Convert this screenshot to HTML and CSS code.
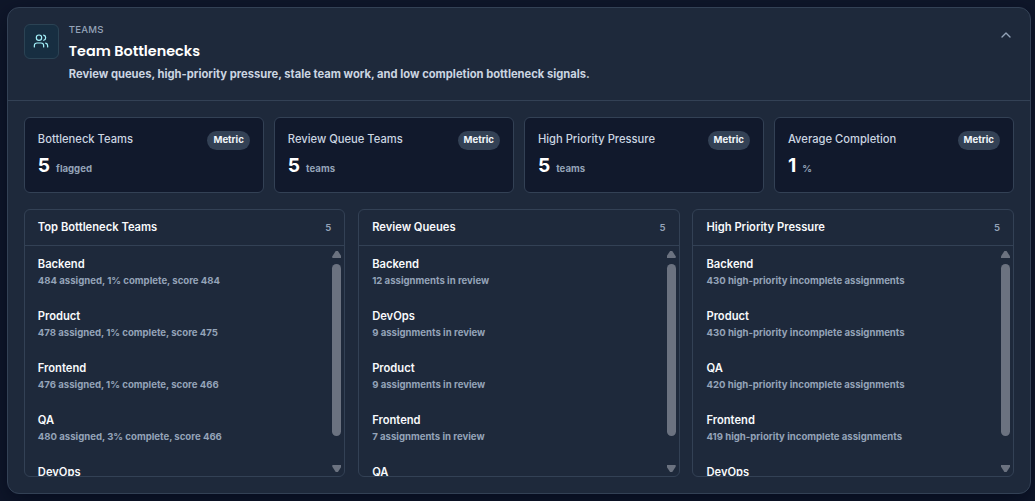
FILE: index.html
```html
<!DOCTYPE html>
<html lang="en">
  <head>
    <meta charset="UTF-8" />
    <meta name="viewport" content="width=device-width, initial-scale=1.0" />
    <title>Team Bottlenecks</title>
    <link rel="stylesheet" href="styles.css">
  </head>
  <body>
    <section class="panel">
      <header class="panel-header">
        <div class="panel-icon">
          <svg width="16" height="16" viewBox="0 0 24 24" fill="none" stroke="currentColor" stroke-width="1.8" stroke-linecap="round" stroke-linejoin="round">
            <path d="M16 21v-2a4 4 0 0 0-4-4H6a4 4 0 0 0-4 4v2" />
            <circle cx="9" cy="7" r="4" />
            <path d="M22 21v-2a4 4 0 0 0-3-3.87" />
            <path d="M16 3.13a4 4 0 0 1 0 7.75" />
          </svg>
        </div>
        <div class="panel-heading">
          <span class="eyebrow">TEAMS</span>
          <h2>Team Bottlenecks</h2>
          <p>Review queues, high-priority pressure, stale team work, and low completion bottleneck signals.</p>
        </div>
        <button class="collapse" type="button" aria-label="Collapse">
          <svg width="16" height="16" viewBox="0 0 24 24" fill="none" stroke="currentColor" stroke-width="2" stroke-linecap="round" stroke-linejoin="round">
            <path d="m18 15-6-6-6 6" />
          </svg>
        </button>
      </header>

      <div class="panel-body">
        <div class="metrics">
          <article class="metric">
            <div class="metric-top"><span class="metric-label">Bottleneck Teams</span><span class="badge">Metric</span></div>
            <div class="metric-value"><strong>5</strong><span>flagged</span></div>
          </article>
          <article class="metric">
            <div class="metric-top"><span class="metric-label">Review Queue Teams</span><span class="badge">Metric</span></div>
            <div class="metric-value"><strong>5</strong><span>teams</span></div>
          </article>
          <article class="metric">
            <div class="metric-top"><span class="metric-label">High Priority Pressure</span><span class="badge">Metric</span></div>
            <div class="metric-value"><strong>5</strong><span>teams</span></div>
          </article>
          <article class="metric">
            <div class="metric-top"><span class="metric-label">Average Completion</span><span class="badge">Metric</span></div>
            <div class="metric-value"><strong>1</strong><span>%</span></div>
          </article>
        </div>

        <div class="lists">
          <article class="list">
            <div class="list-header"><h3>Top Bottleneck Teams</h3><span>5</span></div>
            <div class="list-body">
              <ul>
                <li><strong>Backend</strong><span>484 assigned, 1% complete, score 484</span></li>
                <li><strong>Product</strong><span>478 assigned, 1% complete, score 475</span></li>
                <li><strong>Frontend</strong><span>476 assigned, 1% complete, score 466</span></li>
                <li><strong>QA</strong><span>480 assigned, 3% complete, score 466</span></li>
                <li><strong>DevOps</strong></li>
              </ul>
              <div class="scrollbar"><i class="arrow-up"></i><i class="thumb"></i><i class="arrow-down"></i></div>
            </div>
          </article>
          <article class="list">
            <div class="list-header"><h3>Review Queues</h3><span>5</span></div>
            <div class="list-body">
              <ul>
                <li><strong>Backend</strong><span>12 assignments in review</span></li>
                <li><strong>DevOps</strong><span>9 assignments in review</span></li>
                <li><strong>Product</strong><span>9 assignments in review</span></li>
                <li><strong>Frontend</strong><span>7 assignments in review</span></li>
                <li><strong>QA</strong></li>
              </ul>
              <div class="scrollbar"><i class="arrow-up"></i><i class="thumb"></i><i class="arrow-down"></i></div>
            </div>
          </article>
          <article class="list">
            <div class="list-header"><h3>High Priority Pressure</h3><span>5</span></div>
            <div class="list-body">
              <ul>
                <li><strong>Backend</strong><span>430 high-priority incomplete assignments</span></li>
                <li><strong>Product</strong><span>430 high-priority incomplete assignments</span></li>
                <li><strong>QA</strong><span>420 high-priority incomplete assignments</span></li>
                <li><strong>Frontend</strong><span>419 high-priority incomplete assignments</span></li>
                <li><strong>DevOps</strong></li>
              </ul>
              <div class="scrollbar"><i class="arrow-up"></i><i class="thumb"></i><i class="arrow-down"></i></div>
            </div>
          </article>
        </div>
      </div>
    </section>
  </body>
</html>
```
FILE: styles.css
```css
* {
  box-sizing: border-box;
}

body {
  margin: 0;
  padding: 7px 4px 7px 7px;
  height: 501px;
  overflow: hidden;
  background: #0f172a;
  color: #f8fafc;
  font-family: Inter, sans-serif;
}

h2,
h3,
p,
ul {
  margin: 0;
  padding: 0;
}

/* Panel */
.panel {
  height: 487px;
  background: #1e293b;
  border: 1px solid #334155;
  border-radius: 12px;
  box-shadow: 0 8px 24px rgba(2, 6, 23, 0.6);
}

.panel-header {
  display: flex;
  gap: 10px;
  height: 93px;
  padding: 16px 16px 16px 15.8px;
  border-bottom: 1px solid #334155;
}

.panel-icon {
  display: grid;
  place-items: center;
  flex: none;
  width: 35px;
  height: 35px;
  padding: 0 1px 1px 0;
  border: 1px solid #2b4354;
  border-radius: 6px;
  background: #172e41;
  color: #a5f3fc;
}

.panel-heading {
  flex: 1;
}

.eyebrow {
  display: block;
  font-size: 9.6px;
  line-height: 11px;
  font-weight: 500;
  letter-spacing: 0.2px;
  color: #94a3b8;
}

.panel-heading h2 {
  margin-top: 4px;
  font-family: Poppins, Inter, sans-serif;
  font-size: 14.4px;
  line-height: 24px;
  font-weight: 600;
  color: #fff;
}

.panel-heading p {
  margin-top: 3px;
  font-size: 11.2px;
  line-height: 16px;
  font-weight: 700;
  color: #cbd5e1;
}

.collapse {
  align-self: flex-start;
  height: 16px;
  margin: 3px 0 0;
  padding: 0;
  border: 0;
  background: none;
  color: #94a3b8;
}

.collapse svg {
  display: block;
}

.panel-body {
  padding: 16px 16px 16px 15.8px;
}

/* Metric cards */
.metrics {
  display: grid;
  grid-template-columns: repeat(4, 1fr);
  gap: 10px;
}

.metric {
  height: 76px;
  padding: 12px 13px;
  border: 1px solid #334155;
  border-radius: 6px;
  background: #11192c;
}

.metric-top {
  display: flex;
  justify-content: space-between;
  height: 20px;
}

.metric-label {
  font-size: 11.2px;
  line-height: 18px;
  font-weight: 500;
  color: #cbd5e1;
}

.badge {
  height: 19px;
  margin-top: 1px;
  padding: 0 6px;
  border-radius: 10px;
  background: #334155;
  font-size: 9.6px;
  line-height: 18px;
  font-weight: 700;
  color: #f1f5f9;
}

.metric-value {
  display: flex;
  align-items: baseline;
  gap: 6px;
  margin-top: 3px;
}

.metric-value strong {
  font-size: 19.2px;
  line-height: 24px;
  font-weight: 700;
  color: #fff;
}

.metric-value span {
  font-size: 9.6px;
  font-weight: 700;
  color: #94a3b8;
}

/* Team lists */
.lists {
  display: grid;
  grid-template-columns: repeat(3, 1fr);
  gap: 12.8px;
  margin-top: 16px;
}

.list {
  height: 268px;
  border: 1px solid #334155;
  border-radius: 6px;
  overflow: hidden;
}

.list-header {
  display: flex;
  align-items: center;
  justify-content: space-between;
  height: 36px;
  padding: 0 13px 1px;
  border-bottom: 1px solid #334155;
}

.list-header h3 {
  font-size: 11.2px;
  font-weight: 600;
}

.list-header span {
  font-size: 9.6px;
  font-weight: 600;
  color: #94a3b8;
}

.list-body {
  position: relative;
  height: 230px;
  overflow: hidden;
}

.list-body ul {
  list-style: none;
}

.list-body li {
  height: 52px;
  padding: 10px 13px;
}

.list-body strong,
.list-body li span {
  display: block;
  white-space: nowrap;
}

.list-body strong {
  font-size: 11.2px;
  line-height: 17px;
  font-weight: 600;
}

.list-body li span {
  font-size: 9.6px;
  line-height: 16px;
  font-weight: 700;
  color: #94a3b8;
}

/* Scrollbar over the list */
.scrollbar {
  position: absolute;
  top: 5px;
  right: 3px;
  bottom: 4px;
  display: flex;
  flex-direction: column;
  width: 9px;
}

.thumb {
  height: 172px;
  margin-top: 6px;
  border-radius: 5px;
  background: #6b7280;
}

.arrow-up,
.arrow-down {
  height: 7px;
  background: #6b7280;
}

.arrow-up {
  clip-path: polygon(38% 0, 62% 0, 100% 75%, 100% 100%, 0 100%, 0 75%);
}

.arrow-down {
  margin-top: auto;
  clip-path: polygon(0 0, 100% 0, 100% 25%, 62% 100%, 38% 100%, 0 25%);
}
```
